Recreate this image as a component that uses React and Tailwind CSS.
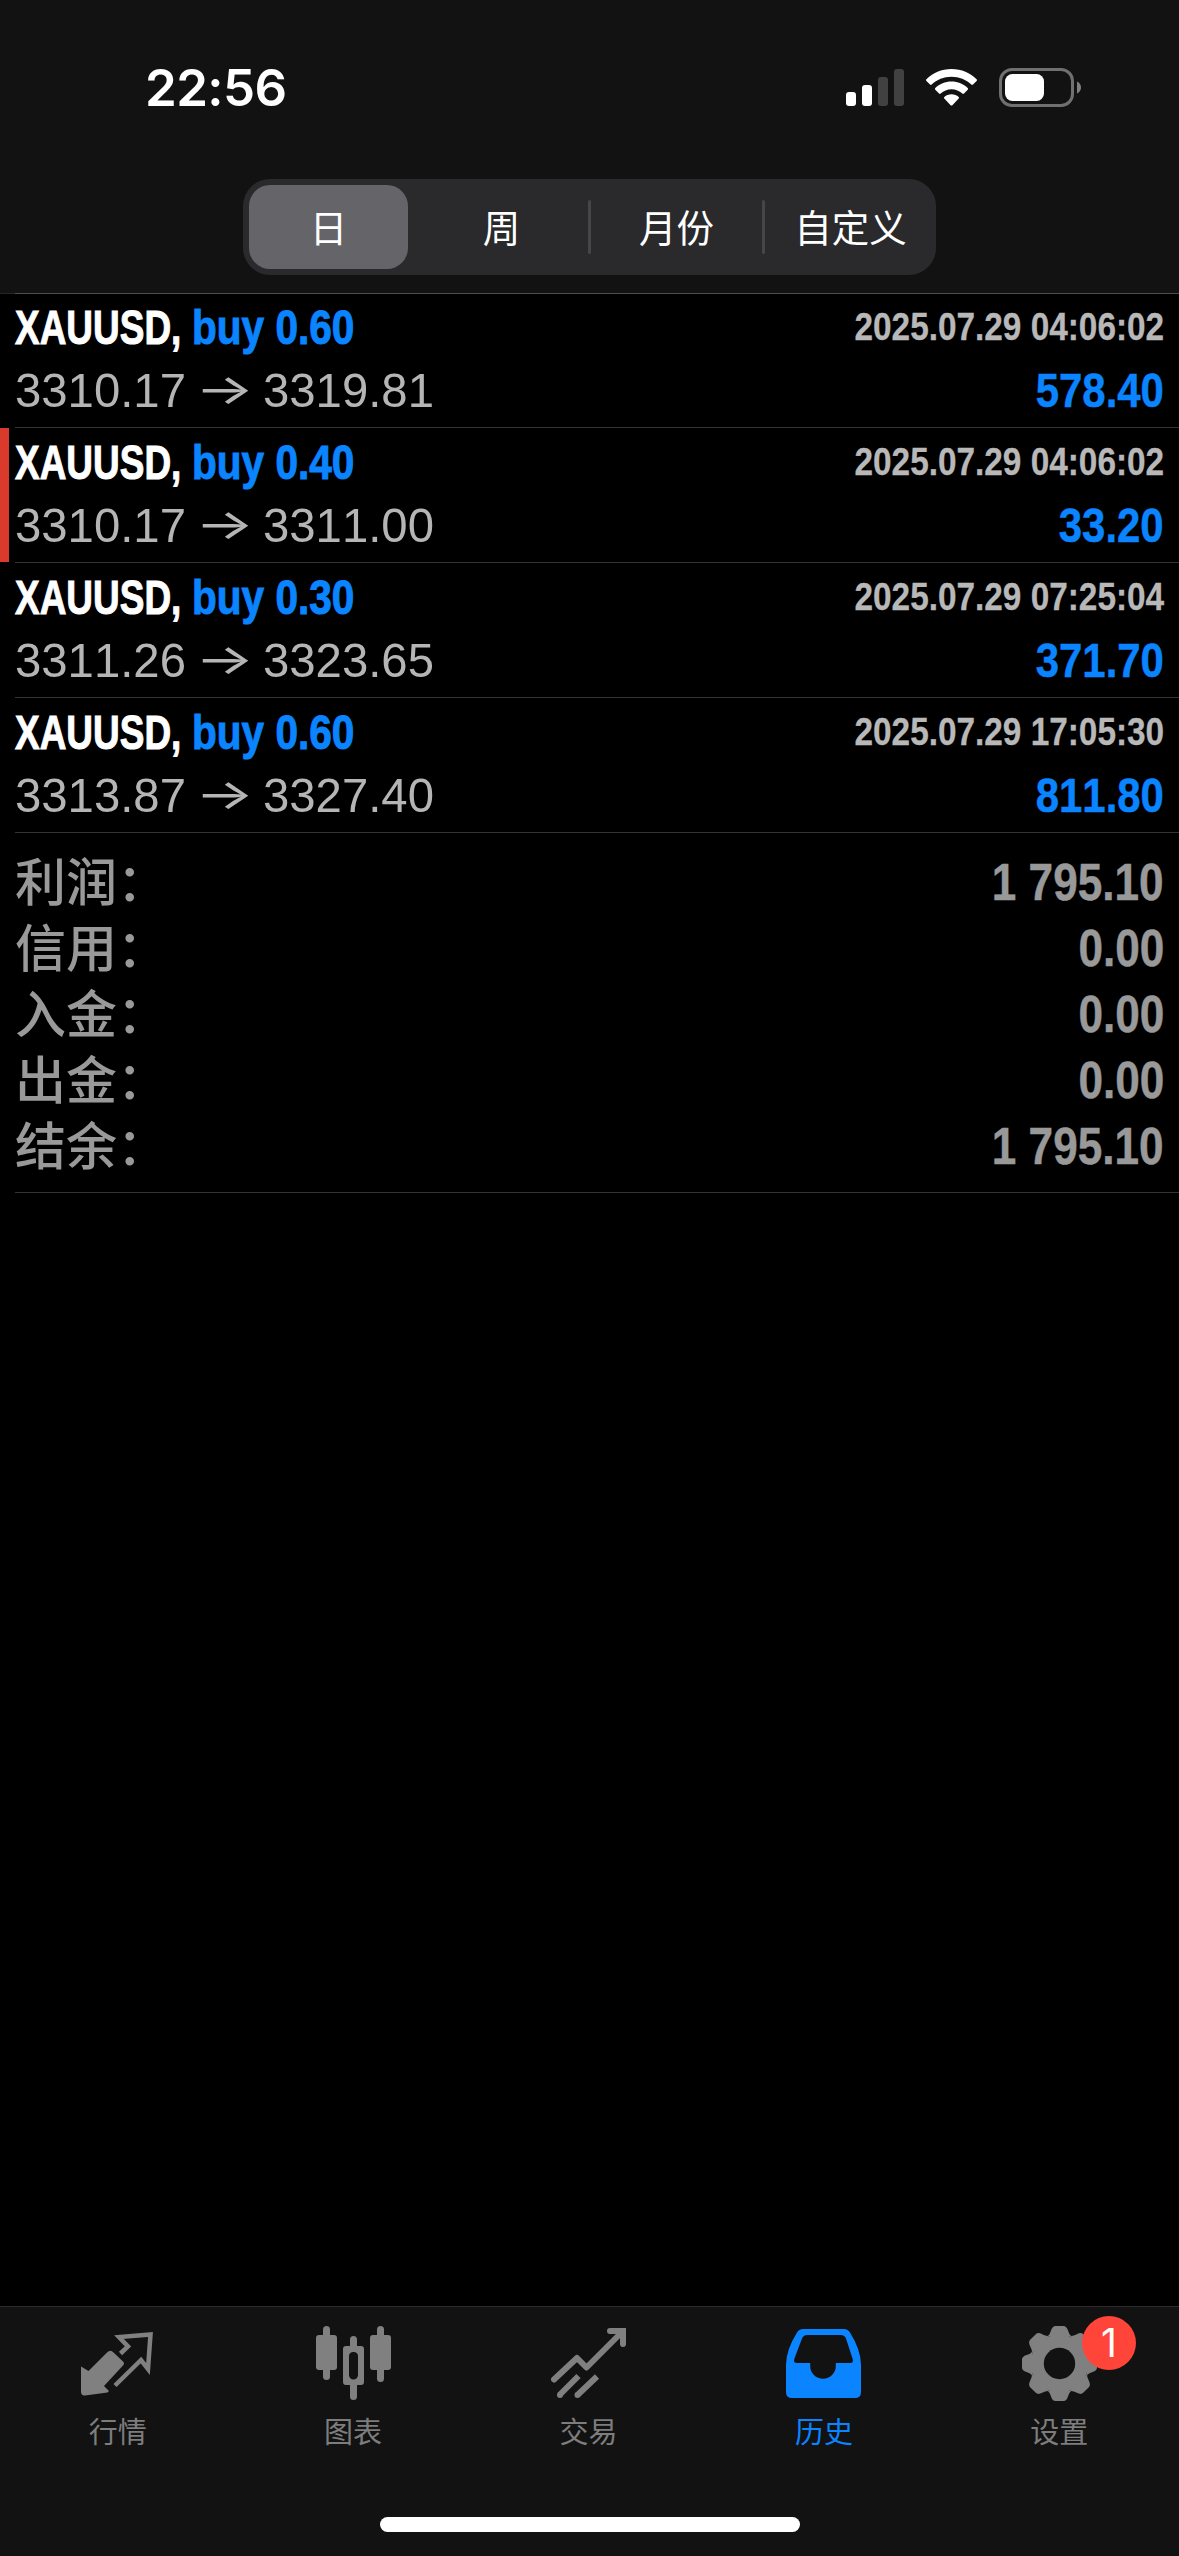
import clsx from "clsx";

const ranges = [
  { label: "日", width: "w-[166px]" },
  { label: "周", width: "w-[173px]" },
  { label: "月份", width: "w-[174px]" },
  { label: "自定义", width: "w-[174px]" },
];

const deals = [
  { id: 1, symbol: "XAUUSD", side: "buy 0.60", open: "3310.17", close: "3319.81", time: "2025.07.29 04:06:02", profit: "578.40" },
  { id: 2, symbol: "XAUUSD", side: "buy 0.40", open: "3310.17", close: "3311.00", time: "2025.07.29 04:06:02", profit: "33.20", marked: true },
  { id: 3, symbol: "XAUUSD", side: "buy 0.30", open: "3311.26", close: "3323.65", time: "2025.07.29 07:25:04", profit: "371.70" },
  { id: 4, symbol: "XAUUSD", side: "buy 0.60", open: "3313.87", close: "3327.40", time: "2025.07.29 17:05:30", profit: "811.80" },
];

const summary = [
  { label: "利润：", value: "1 795.10" },
  { label: "信用：", value: "0.00" },
  { label: "入金：", value: "0.00" },
  { label: "出金：", value: "0.00" },
  { label: "结余：", value: "1 795.10" },
];

const StatusBar = () => (
  <div className="flex h-[179px] items-start justify-between pl-[145px] pr-[98px]">
    <span className="mt-[57px] font-['Inter',sans-serif] text-[51px] leading-[62px] font-semibold tracking-[-0.6px] text-white">22:56</span>
    <div className="mt-[68px] flex items-start">
      <svg width="58" height="40" viewBox="0 0 58 40">
        <rect x="0" y="24" width="10" height="14" rx="3" fill="#fff" />
        <rect x="16" y="17" width="10" height="21" rx="3" fill="#fff" />
        <rect x="32" y="9" width="10" height="29" rx="3" fill="#414141" />
        <rect x="48" y="1" width="10" height="37" rx="3" fill="#414141" />
      </svg>
      <svg className="ml-[22px]" width="51" height="40" viewBox="0 0 51 40" fill="#fff">
        <path d="M25.5 1C35.5 1 44.3 4.800 50.600 11.200c.5.500.5 1.200 0 1.700l-3.600 3.600c-.5.500-1.200.5-1.700 0C40.200 11.600 33.200 8.700 25.500 8.700S10.800 11.600 5.700 16.500c-.5.500-1.200.5-1.700 0L.4 12.900c-.5-.5-.5-1.200 0-1.700C6.700 4.800 15.500 1 25.500 1z" />
        <path d="M25.500 13.600c6.400 0 12 2.500 16.200 6.500.5.500.5 1.200 0 1.700l-3.700 3.700c-.5.500-1.200.5-1.700 0-2.900-2.600-6.600-4.200-10.800-4.200s-7.900 1.600-10.800 4.200c-.5.500-1.200.5-1.700 0l-3.700-3.700c-.5-.5-.5-1.200 0-1.700 4.200-4 9.800-6.500 16.200-6.500z" />
        <path d="M25.500 26.200c2.800 0 5.300 1 7.200 2.700.5.500.5 1.200 0 1.700l-6.300 6.600c-.5.500-1.300.5-1.800 0l-6.300-6.600c-.5-.5-.5-1.200 0-1.700 1.900-1.700 4.400-2.700 7.200-2.700z" />
      </svg>
      <svg className="ml-[22px]" width="82" height="40" viewBox="0 0 82 40">
        <rect x="1.500" y="1.500" width="72" height="36" rx="11.500" fill="none" stroke="#707070" strokeWidth="3" />
        <rect x="6" y="6" width="39" height="27" rx="7.500" fill="#fff" />
        <path d="M78 13.500c2.500 1 4 3.400 4 6s-1.500 5-4 6z" fill="#808080" />
      </svg>
    </div>
  </div>
);

const RangePicker = () => (
  <div className="mx-auto flex h-24 w-[693px] rounded-[27px] bg-[#2a2a2c] py-[6px] pl-[6px]">
    {ranges.map(({ label, width }, index) => (
      <div key={label} className={clsx("flex items-center", width)}>
        {index > 1 && <div className="h-[54px] w-[3px] rounded-full bg-[#464649]" />}
        <div
          className={clsx(
            "flex h-[84px] items-center justify-center pb-[2px] text-[37.500px] text-white",
            index === 0 ? "w-[159px] rounded-[21px] bg-[#656469]" : "flex-1"
          )}
        >
          {label}
        </div>
      </div>
    ))}
  </div>
);

const DealRow = ({ deal }) => (
  <div className="flex h-[135px]">
    <div className={clsx("mb-px w-[9px]", deal.marked && "bg-[#d93a2b]")} />
    <div className="ml-[6px] flex-1 border-b border-[#333333] pt-[3px] pr-[15px] font-['Liberation_Sans','Noto_Sans_CJK_SC',sans-serif] [font-kerning:none]">
      <div className="flex h-[63px] items-center justify-between font-bold whitespace-pre">
        <div className="flex w-[400px] text-[48px] [-webkit-text-stroke:1px]">
          <div className="w-[177px] text-white">
            <span className="inline-block origin-left scale-x-[0.77]">{deal.symbol},</span>
          </div>
          <div className="w-[180px] text-[#0a84ff]">
            <span className="inline-block origin-left scale-x-[0.845]">{deal.side}</span>
          </div>
        </div>
        <span className="origin-right scale-x-[0.855] text-[39px] text-[#b8b8b8] [-webkit-text-stroke:0.3px]">{deal.time}</span>
      </div>
      <div className="flex h-[64px] items-center justify-between text-[49px] whitespace-pre">
        <div className="flex items-center text-[#b5b5b5]">
          <div className="w-[184px]">
            <span className="inline-block origin-left scale-x-[0.965]">{deal.open}</span>
          </div>
          <div className="w-[64px] pb-[4px] font-['Inter',sans-serif] text-[42px] leading-[50px] font-normal">
            <span className="inline-block origin-left -translate-x-[4px] scale-x-[1.48]">→</span>
          </div>
          <span className="inline-block origin-left scale-x-[0.965]">{deal.close}</span>
        </div>
        <span className="origin-right scale-x-[0.855] font-bold text-[#0a84ff] [-webkit-text-stroke:0.5px]">{deal.profit}</span>
      </div>
    </div>
  </div>
);

const QuotesIcon = () => (
  <svg width="75" height="75" viewBox="0 0 75 75" fill="#808080">
    <path d="M1 40.500 8.500 45 27 26.500q3.500-3.500 6.500 0L43 35.500q2 2 0 4L24 60l5 5-1.500 1.500L5 69.500q-4 .5-4-4z" />
    <path d="M40.500 27.500 48 20.500 39 11 70.500 8.500 68 43 61 34 35 59.500" fill="none" stroke="#808080" strokeWidth="4.500" />
  </svg>
);

const ChartIcon = () => (
  <svg width="75" height="75" viewBox="0 0 75 75" fill="#808080">
    <rect x="7" y="0" width="7" height="54" rx="3.500" />
    <rect x="0" y="9" width="21" height="35" rx="3" />
    <rect x="61" y="0" width="7" height="56" rx="3.500" />
    <rect x="54" y="9" width="21" height="35" rx="3" />
    <path d="M34 21v-7.500a3.500 3.500 0 0 1 7 0V20h4a3 3 0 0 1 3 3v33a3 3 0 0 1-3 3h-4v11.500a3.500 3.500 0 0 1-7 0V59h-4a3 3 0 0 1-3-3V23a3 3 0 0 1 3-3h4zM37.500 26a4 4 0 0 0-4.500 4v19a4 4 0 0 0 9 0V30a4 4 0 0 0-4.500-4z" fillRule="evenodd" />
  </svg>
);

const TradeIcon = () => (
  <svg width="75" height="75" viewBox="0 0 75 75" fill="none" stroke="#808080" strokeWidth="6">
    <path d="M3 53.500 26 32l9.500 9.500L71 6" strokeLinejoin="round" strokeLinecap="round" />
    <path d="M59 5h13v13" strokeLinecap="round" />
    <path d="M8.500 69 27.500 50M26.500 69 46 50.500" />
    <circle cx="9" cy="69" r="3" fill="#808080" stroke="none" />
    <circle cx="26.500" cy="69" r="3" fill="#808080" stroke="none" />
  </svg>
);

const HistoryIcon = () => (
  <svg width="75" height="75" viewBox="0 0 75 75" fill="#0a84ff">
    <path fillRule="evenodd" d="M17 3h41q4 0 6 3.500Q75 24 75 39v27q0 6-6 6H6q-6 0-6-6V39Q0 24 11 6.500 13 3 17 3zM21 9q-3.500 0-5 3.500L9 31q-1 2.500-1 3.500 0 2.500 3 2.500h13.200v3a12.800 12.800 0 0 0 25.600 0v-3h14.200q3 0 3-2.500 0-1-1-3.500L60 12.500Q58.500 9 55 9z" />
  </svg>
);

const GearIcon = () => (
  <svg width="75" height="75" viewBox="-37.5 -37.5 75 75">
    <g fill="#808080">
      <circle r="29" />
      {[0, 45, 90, 135, 180, 225, 270, 315].map((angle) => (
        <path key={angle} transform={`rotate(${angle})`} d="M-12-27Q-9.500-29-8.500-33-7-37.500-4-37.500H4Q7-37.500 8.500-33 9.500-29 12-27z" />
      ))}
    </g>
    <circle r="15.700" fill="#121212" />
  </svg>
);

const tabs = [
  { label: "行情", icon: QuotesIcon },
  { label: "图表", icon: ChartIcon },
  { label: "交易", icon: TradeIcon },
  { label: "历史", icon: HistoryIcon, active: true },
  { label: "设置", icon: GearIcon, badge: 1 },
];

const TabBar = () => (
  <div className="flex h-[250px] flex-col items-center justify-between border-t border-[#2b2b2b] bg-[#121212] pb-[24px]">
    <div className="flex w-full pt-[19px] pr-[2px]">
      {tabs.map(({ label, icon: Icon, active, badge }) => (
        <div key={label} className={clsx("flex flex-1 flex-col items-center", active ? "text-[#0a84ff]" : "text-[#7d7d7d]")}>
          <div className="relative">
            <Icon />
            {badge && (
              <span className="absolute -top-[10px] left-[60px] flex h-[54px] w-[54px] items-center justify-center rounded-full bg-[#ff453a] font-['Inter',sans-serif] text-[39px] text-white">
                {badge}
              </span>
            )}
          </div>
          <span className="mt-[7px] text-[29px] leading-[44px]">{label}</span>
        </div>
      ))}
    </div>
    <div className="h-[15px] w-[420px] rounded-full bg-white" />
  </div>
);

export default function App() {
  return (
    <div lang="zh-CN" className="flex h-[2556px] w-[1179px] flex-col overflow-hidden bg-black font-['Noto_Sans_CJK_SC',sans-serif]">
      <header className="h-[293px] bg-[#121212]">
        <StatusBar />
        <RangePicker />
      </header>
      <main className="flex-1">
        <div className="-mb-px flex h-px bg-[#262626]">
          <div className="ml-[15px] flex-1 bg-[#4d4d4d]" />
        </div>
        {deals.map((deal) => (
          <DealRow key={deal.id} deal={deal} />
        ))}
        <div className="ml-[15px] h-[360px] border-b border-[#333333] pt-[16px] pr-[15px] text-[#999999]">
          {summary.map((item) => (
            <div key={item.label} className="flex h-[66px] items-center justify-between">
              <span className="-mt-[6px] text-[51px] leading-[66px] font-medium">{item.label}</span>
              <span className="mt-[2px] origin-right scale-x-[0.865] font-['Liberation_Sans',sans-serif] text-[51px] font-bold [-webkit-text-stroke:0.5px]">{item.value}</span>
            </div>
          ))}
        </div>
      </main>
      <TabBar />
    </div>
  );
}
